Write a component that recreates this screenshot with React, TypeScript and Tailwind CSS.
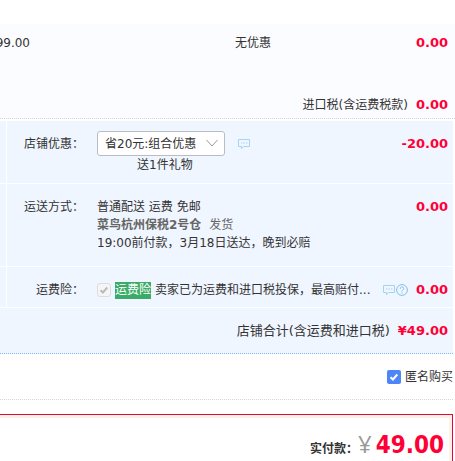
import type { ReactNode } from "react";

function CommentIcon() {
  return (
    <svg viewBox="0 0 12 12" className="size-3 shrink-0" fill="none" stroke="#a5d4f2">
      <path d="M.5 1.5h11v7H5.5L3.5 10.7V8.5h-3z" />
      <path d="M3 5h1.5M5.5 5H7M8 5h1.5" />
    </svg>
  );
}

function HelpIcon() {
  return (
    <svg viewBox="0 0 12 12" className="size-3 shrink-0" fill="none" stroke="#7dbfe8">
      <circle cx="6" cy="6" r="5.4" />
      <path d="M4.2 4.8c0-2.4 3.6-2.4 3.6-.2C7.8 5.8 6 5.8 6 7.4M6 8.4v1.1" />
    </svg>
  );
}

function Check({ className }: { className: string }) {
  return (
    <svg
      viewBox="0 0 14 14"
      className={`pointer-events-none absolute inset-0 size-3.5 ${className}`}
      fill="none"
      stroke="currentColor"
      strokeWidth="2"
    >
      <path d="M3.5 7.2l2.4 2.3 4.4-5" />
    </svg>
  );
}

function Amount({ children }: { children: ReactNode }) {
  return <span className="text-[13px] font-bold text-[#ff0036]">{children}</span>;
}

function Row({ label, children }: { label: string; children: ReactNode }) {
  return (
    <div className="flex border-b border-white">
      <div className="w-[7px] shrink-0 border-r border-white" />
      <div className="flex flex-1 items-start pr-[5px] pt-[14px]">
        <div className="mr-[13px] w-[77px] shrink-0 text-right">{label}</div>
        {children}
      </div>
    </div>
  );
}

export default function App() {
  return (
    <main className="overflow-hidden bg-white pr-[2px] pt-6 font-['DejaVu_Sans','Noto_Sans_CJK_SC',sans-serif] text-[12px] leading-[18px] text-[#333]">
      <section className="-mr-[2px] flex flex-col gap-11 border-b border-dotted border-[#d5d5d5] bg-[#fbfcff] pb-1 pr-[7px] pt-[10px]">
        <div className="flex">
          <div className="flex w-[30px] justify-end">99.00</div>
          <div className="flex-1 text-right">无优惠</div>
          <div className="w-[177px] text-right">
            <Amount>0.00</Amount>
          </div>
        </div>
        <div className="flex justify-end gap-2">
          <span>进口税(含运费税款)</span>
          <Amount>0.00</Amount>
        </div>
      </section>

      <section className="mt-[2px] border-b border-dotted border-[#7eb6ff] bg-[#f0f6ff]">
        <Row label="店铺优惠：">
          <div className="-mt-1 pb-[9px]">
            <div className="flex items-center gap-[13px]">
              <div className="relative">
                <select
                  aria-label="店铺优惠"
                  className="block h-[25px] w-32 appearance-none rounded-[3px] border border-[#b9bcc4] bg-white pl-[7px] text-[12px]"
                >
                  <option>省20元:组合优惠</option>
                  <option>无优惠</option>
                </select>
                <svg
                  viewBox="0 0 12 8"
                  className="pointer-events-none absolute right-[7px] top-2 h-2 w-3"
                  fill="none"
                  stroke="#999"
                >
                  <path d="M.5 1L6 7l5.5-6" />
                </svg>
              </div>
              <CommentIcon />
            </div>
            <p className="pl-10">送1件礼物</p>
          </div>
          <div className="flex-1 text-right">
            <Amount>-20.00</Amount>
          </div>
        </Row>

        <Row label="运送方式：">
          <div className="pb-[14px]">
            <p>普通配送 运费 免邮</p>
            <p className="text-[#666]">
              <strong className="mr-2">菜鸟杭州保税2号仓</strong>发货
            </p>
            <p>19:00前付款，3月18日送达，晚到必赔</p>
          </div>
          <div className="flex-1 text-right">
            <Amount>0.00</Amount>
          </div>
        </Row>

        <Row label="运费险：">
          <div className="flex flex-1 items-center pb-2">
            <span className="relative mr-1 size-3.5">
              <input
                id="insurance"
                type="checkbox"
                checked
                disabled
                readOnly
                className="block size-3.5 appearance-none rounded-[3px] border border-[#dcdcdc] bg-[#f5f5f5]"
              />
              <Check className="text-[#bbb]" />
            </span>
            <label htmlFor="insurance" className="mr-1 bg-[#3aab68] leading-[17px] text-white">
              运费险
            </label>
            <span>卖家已为运费和进口税投保，最高赔付...</span>
            <span className="ml-auto mr-2 flex gap-px">
              <CommentIcon />
              <HelpIcon />
            </span>
            <Amount>0.00</Amount>
          </div>
        </Row>

        <div className="flex justify-end gap-2 pb-[13px] pr-[5px] pt-[14px]">
          <span className="text-[13px]">店铺合计(含运费和进口税)</span>
          <Amount>¥49.00</Amount>
        </div>
      </section>

      <div className="flex items-center justify-end gap-1 border-b border-dotted border-[#d5d5d5] pb-[13px] pt-[14px]">
        <span className="relative size-3.5">
          <input
            id="anonymous"
            type="checkbox"
            defaultChecked
            className="block size-3.5 appearance-none rounded-[2px] bg-[#4f86f7]"
          />
          <Check className="text-white" />
        </span>
        <label htmlFor="anonymous">匿名购买</label>
      </div>

      <section className="mt-[14px] border-r border-t border-[#e0093a]">
        <div className="flex items-baseline justify-end border-r-[3px] border-t-[3px] border-[#fff0e8] pb-3 pr-[5px] pt-[11px]">
          <strong>实付款：</strong>
          <span className="mr-1 font-['Open_Sans',sans-serif] text-[24px] leading-[30px] text-[#999]">¥</span>
          <strong className="font-['DejaVu_Sans_Condensed','Open_Sans',sans-serif] text-[24px] leading-[30px] text-[#ff0036]">
            49.00
          </strong>
        </div>
      </section>
    </main>
  );
}
